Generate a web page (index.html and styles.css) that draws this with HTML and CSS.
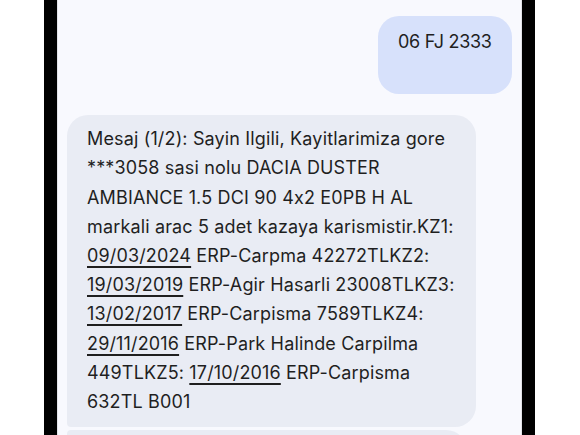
FILE: index.html
```html
<!DOCTYPE html>
<html lang="tr">
<head>
<meta charset="UTF-8">
<meta name="viewport" content="width=device-width, initial-scale=1.0">
<title>Mesajlar</title>
<link rel="stylesheet" href="styles.css">
</head>
<body>

<div class="margin left"></div>
<div class="bezel"></div>

<div id="screen">
    <div class="row sent">
        <div class="bubble out">06 FJ 2333</div>
    </div>

    <div class="row received">
        <div class="bubble in first">
            Mesaj (1/2): Sayin Ilgili, Kayitlarimiza gore<br>
            ***3058 sasi nolu DACIA DUSTER<br>
            AMBIANCE 1.5 DCI 90 4x2 E0PB H AL<br>
            markali arac 5 adet kazaya karismistir.KZ1:<br>
            <span class="date">09/03/2024</span> ERP-Carpma 42272TLKZ2:<br>
            <span class="date">19/03/2019</span> ERP-Agir Hasarli 23008TLKZ3:<br>
            <span class="date">13/02/2017</span> ERP-Carpisma 7589TLKZ4:<br>
            <span class="date">29/11/2016</span> ERP-Park Halinde Carpilma<br>
            449TLKZ5: <span class="date">17/10/2016</span> ERP-Carpisma<br>
            632TL B001
        </div>
        <!-- second part of the message, scrolled below the fold -->
        <div class="bubble in next"></div>
    </div>
</div>

<div class="bezel"></div>
<div class="margin right"></div>

</body>
</html>
```

FILE: styles.css
```css
html, body {
    margin: 0;
    padding: 0;
}
body {
    display: flex;
    height: 435px;
    overflow: hidden;
    background-color: #ffffff;
    font-family: Inter, Roboto, sans-serif;
    color: #1f1f1f;
}
.margin.left {
    width: 44px;
}
.margin.right {
    width: 45px;
}
.bezel {
    width: 13px;
    background-color: #000;
}
#screen {
    flex: 1;
    background-color: #f8f9fe;
    border-left: 1px solid #e2e3e8;
    border-right: 1px solid #e2e3e8;
    padding-top: 16px;
    display: flex;
    flex-direction: column;
    overflow: hidden;
}
.row {
    display: flex;
    flex-direction: column;
}
.row.sent {
    align-items: flex-end;
    padding-right: 9px;
}
.row.received {
    align-items: flex-start;
    padding-left: 9px;
    margin-top: 21px;
    gap: 3px;
}
.bubble {
    font-size: 18px;
    line-height: 29.2px;
    letter-spacing: 0.15px;
    border-radius: 21px;
}
.bubble.out {
    background-color: #d7e1fb;
    padding: 11px 22px 38px 20px;
    width: 92px;
    letter-spacing: -0.3px;
    white-space: nowrap;
}
.bubble.in {
    background-color: #e9ecf4;
    width: 369px;
    padding: 9px 20px 11px 20px;
    white-space: nowrap;
}
.bubble.in.first {
    border-bottom-left-radius: 4px;
}
.bubble.in.next {
    border-top-left-radius: 4px;
    width: 400px;
    height: 60px;
    padding: 0;
}
.date {
    text-decoration: underline;
    text-decoration-thickness: 1.5px;
    text-underline-offset: 4px;
}
```
